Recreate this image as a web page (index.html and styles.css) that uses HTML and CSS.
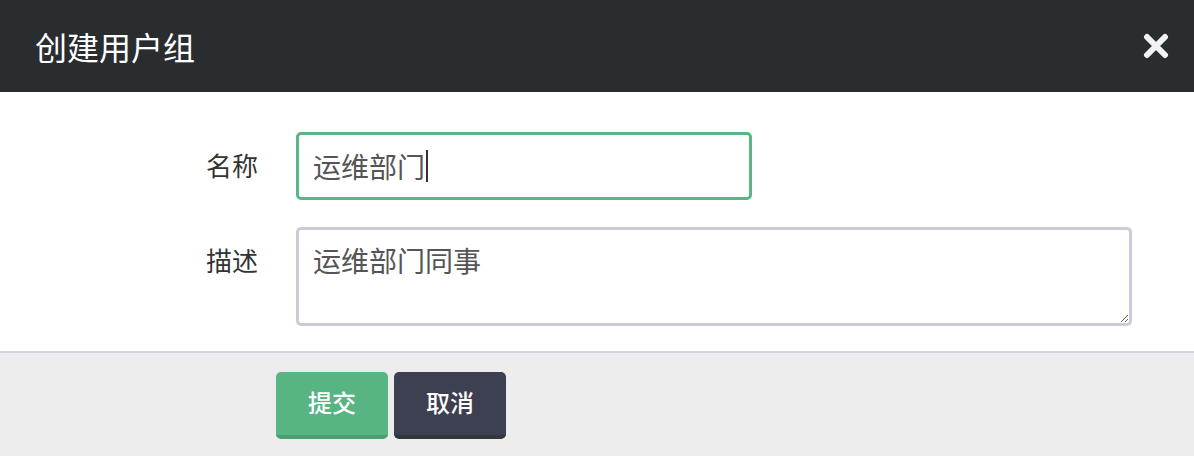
FILE: index.html
```html
<!DOCTYPE html>
<html lang="zh-CN">
<head>
<meta charset="utf-8">
<title>创建用户组</title>
<link rel="stylesheet" href="styles.css">
</head>
<body>
<div class="dialog">
  <div class="dialog-header">
    <h1 class="dialog-title">创建用户组</h1>
    <button class="close-btn" type="button" aria-label="关闭">
      <svg width="26" height="26" viewBox="0 0 26 26"><path d="M4 4 L22 22 M22 4 L4 22" stroke="#f2f2f2" stroke-width="6" stroke-linecap="round" fill="none"/></svg>
    </button>
  </div>
  <div class="dialog-body">
    <div class="form-row">
      <label class="form-label">名称</label>
      <div class="field-wrap">
        <input class="text-input" type="text" value="运维部门">
        <span class="caret"></span>
      </div>
    </div>
    <div class="form-row">
      <label class="form-label">描述</label>
      <textarea class="text-area">运维部门同事</textarea>
    </div>
  </div>
  <div class="dialog-footer">
    <button class="btn btn-primary" type="button">提交</button>
    <button class="btn btn-dark" type="button">取消</button>
  </div>
</div>
</body>
</html>
```
FILE: styles.css
```css
* { box-sizing: border-box; }
html, body { margin: 0; padding: 0; }
body {
  width: 1194px;
  height: 456px;
  overflow: hidden;
  background: #ffffff;
  font-family: "Noto Sans CJK SC", "Noto Sans", sans-serif;
}
.dialog {
  display: flex;
  flex-direction: column;
  height: 456px;
}
.dialog-header {
  height: 92px;
  background: #2a2d2f;
  display: flex;
  align-items: center;
  justify-content: space-between;
  padding: 0 25px 0 35px;
}
.dialog-title {
  margin: 0;
  color: #ffffff;
  font-size: 32px;
  font-weight: 400;
  line-height: 1;
}
.close-btn {
  background: none;
  border: 0;
  padding: 0;
  width: 26px;
  height: 26px;
  display: flex;
}
.dialog-body {
  padding: 40px 62px 25px 0;
  display: flex;
  flex-direction: column;
  gap: 27px;
}
.form-row {
  display: grid;
  grid-template-columns: 258px 1fr;
  column-gap: 38px;
  align-items: start;
}
.form-label {
  text-align: right;
  font-size: 26px;
  color: #333333;
  line-height: 66px;
}
.field-wrap {
  position: relative;
  width: 456px;
}
.text-input {
  width: 456px;
  height: 68px;
  border: 3px solid #5bb585;
  border-radius: 5px;
  padding: 0 14px;
  font-family: inherit;
  font-size: 28px;
  color: #555555;
  outline: none;
  background: #fff;
}
.caret {
  position: absolute;
  left: 130px;
  top: 18px;
  width: 2px;
  height: 32px;
  background: #333;
}
.text-area {
  width: 836px;
  height: 99px;
  border: 3px solid #cdcbdb;
  border-radius: 5px;
  padding: 9px 14px;
  font-family: inherit;
  font-size: 28px;
  line-height: 42px;
  color: #555555;
  resize: vertical;
  outline: none;
  display: block;
}
.dialog-footer {
  flex: 1;
  background: #ededed;
  border-top: 2px solid #d3d1de;
  padding: 19px 0 0 276px;
  display: flex;
  gap: 6px;
  align-items: flex-start;
}
.btn {
  width: 112px;
  height: 67px;
  border: 0;
  border-radius: 5px;
  font-family: inherit;
  font-size: 24px;
  font-weight: 500;
  color: #ffffff;
  padding: 0 0 4px;
}
.btn-primary {
  background: #58b583;
  border-bottom: 4px solid #4c9f73;
}
.btn-dark {
  background: #3d4050;
  border-bottom: 4px solid #33353f;
}
```
